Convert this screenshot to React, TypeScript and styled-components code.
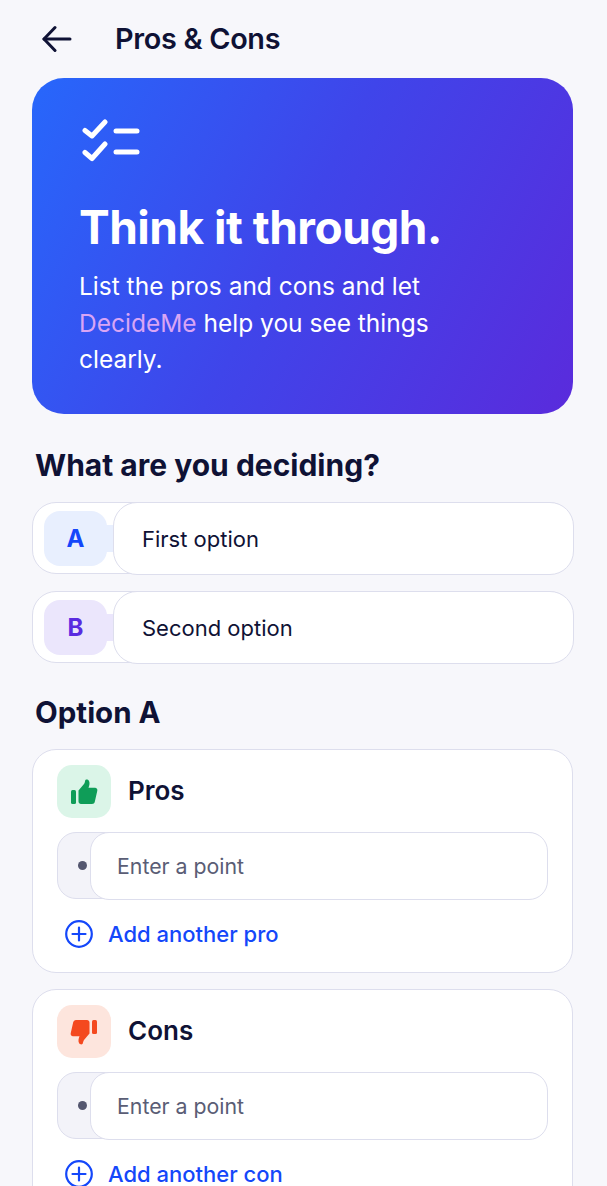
import React from "react";
import styled, { createGlobalStyle } from "styled-components";

const GlobalStyle = createGlobalStyle`
  html, body {
    margin: 0;
    padding: 0;
    height: 1186px;
    overflow: hidden;
    background: #f7f7fb;
    font-family: Inter, "Liberation Sans", sans-serif;
    color: #0f1235;
  }
  * { box-sizing: border-box; }
`;

const BackIcon = () => (
  <svg width="30" height="28" viewBox="0 0 30 28" fill="none" stroke="#0f1235" strokeWidth="3" strokeLinecap="round" strokeLinejoin="round">
    <path d="M2 14h26" />
    <path d="M13 2.500 2 14l11 11.500" />
  </svg>
);

const ChecklistIcon = () => (
  <svg width="58" height="44" viewBox="0 0 58 44" fill="none" stroke="#fff" strokeWidth="5" strokeLinecap="round" strokeLinejoin="round">
    <path d="M3 11.500 10 17 23 3" />
    <path d="M3 33.500 10 39.500 23 25" />
    <path d="M34 12h21" />
    <path d="M34 33h21" />
  </svg>
);

const ThumbIcon = ({ color, down }: { color: string; down?: boolean }) => (
  <svg width="28" height="26" viewBox="0 0 28 26" fill={color} style={down ? { transform: "rotate(180deg)" } : undefined}>
    <rect x="1" y="11" width="5" height="14" rx="1.500" />
    <path d="M8.500 11.500 14 5c.8-1.200 1-2.800 1.200-3.600.2-1 2.800-1.300 3.800.6 1 2 .4 4.600-.5 6.800h6.500c1.600 0 2.700 1.400 2.300 2.900l-2.500 11c-.3 1.300-1.400 2.300-2.800 2.300H11c-1.400 0-2.500-1.100-2.500-2.500V11.500Z" />
  </svg>
);

const PlusIcon = () => (
  <svg width="28" height="28" viewBox="0 0 28 28" fill="none" stroke="#1447fa" strokeWidth="2.200" strokeLinecap="round">
    <circle cx="14" cy="14" r="12.800" />
    <path d="M14 7.500v13M7.500 14h13" />
  </svg>
);

const ProsConsCard = ({ kind }: { kind: "pro" | "con" }) => {
  const isPro = kind === "pro";
  return (
    <Card>
      <CardHeader>
        <CardIcon $bg={isPro ? "#dbf5e8" : "#fde5dd"}>
          <ThumbIcon color={isPro ? "#0f9d58" : "#f4491f"} down={!isPro} />
        </CardIcon>
        <CardTitle>{isPro ? "Pros" : "Cons"}</CardTitle>
      </CardHeader>
      <PointRow>
        <Bullet />
        <PointInput>Enter a point</PointInput>
      </PointRow>
      <AddRow>
        <PlusIcon />
        <AddLabel>{isPro ? "Add another pro" : "Add another con"}</AddLabel>
      </AddRow>
    </Card>
  );
};

export default function App() {
  return (
    <Page>
      <GlobalStyle />
      <Header>
        <BackIcon />
        <PageTitle>Pros &amp; Cons</PageTitle>
      </Header>

      <Hero>
        <ChecklistIcon />
        <HeroTitle>Think it through.</HeroTitle>
        <HeroText>
          List the pros and cons and let <Brand>DecideMe</Brand> help you see things clearly.
        </HeroText>
      </Hero>

      <SectionTitle>What are you deciding?</SectionTitle>
      <OptionList>
        <OptionRow>
          <OptionBadge $bg="#e8effe" $color="#1447fa">A</OptionBadge>
          <OptionInput>First option</OptionInput>
        </OptionRow>
        <OptionRow>
          <OptionBadge $bg="#ebe6fc" $color="#5a2be0">B</OptionBadge>
          <OptionInput>Second option</OptionInput>
        </OptionRow>
      </OptionList>

      <OptionHeading>Option A</OptionHeading>
      <CardList>
        <ProsConsCard kind="pro" />
        <ProsConsCard kind="con" />
      </CardList>
    </Page>
  );
}

const Page = styled.div`
  width: 607px;
  height: 1186px;
  overflow: hidden;
  padding: 0 34px 0 32px;
  background: #f7f7fb;
`;

const Header = styled.header`
  display: flex;
  align-items: center;
  height: 78px;
  padding-left: 10px;
  gap: 43px;
`;

const PageTitle = styled.h1`
  margin: 0;
  font-size: 28.800px;
  font-weight: 600;
  letter-spacing: -0.3px;
  line-height: 34px;
`;

const Hero = styled.section`
  height: 336px;
  padding: 41px 47px 0 47px;
  border-radius: 32px;
  background: linear-gradient(118deg, #2767fb 0%, #3f45ea 48%, #5a2bdc 100%);
  color: #fff;

  svg {
    display: block;
    margin-left: 3px;
  }
`;

const HeroTitle = styled.h2`
  margin: 35px 0 0;
  font-size: 46px;
  font-weight: 700;
  line-height: 58px;
  letter-spacing: -0.5px;
  white-space: nowrap;
`;

const HeroText = styled.p`
  margin: 12px 0 0;
  width: 370px;
  font-size: 24.500px;
  line-height: 36.500px;
  font-weight: 400;
`;

const Brand = styled.span`
  color: #d9a5f5;
`;

const SectionTitle = styled.h3`
  margin: 32px 0 0 3px;
  font-size: 30px;
  font-weight: 700;
  line-height: 38px;
`;

const OptionList = styled.div`
  display: flex;
  flex-direction: column;
  gap: 17px;
  margin-top: 18px;
`;

const OptionRow = styled.div`
  display: flex;
  align-items: stretch;
  height: 72px;
  border: 1.500px solid #dddeed;
  border-radius: 24px;
  background: #fff;
  padding-left: 11px;
`;

const OptionBadge = styled.div<{ $bg: string; $color: string }>`
  position: relative;
  flex: none;
  display: flex;
  align-items: center;
  justify-content: center;
  align-self: center;
  width: 63px;
  height: 55px;
  margin-right: 6px;
  border-radius: 16px;
  background: ${(p) => p.$bg};
  color: ${(p) => p.$color};
  font-size: 24px;
  font-weight: 700;

  &::after {
    content: "";
    position: absolute;
    top: 14px;
    bottom: 14px;
    right: -6px;
    width: 7px;
    background: ${(p) => p.$bg};
  }
`;

const OptionInput = styled.div`
  flex: 1;
  display: flex;
  align-items: center;
  margin: -1.500px -1.500px -1.500px 0;
  padding: 1px 0 0 28px;
  border: 1.500px solid #dddeed;
  border-radius: 24px;
  background: #fff;
  font-size: 22px;
  font-weight: 400;
`;

const OptionHeading = styled.h3`
  margin: 30px 0 0 3px;
  font-size: 29.500px;
  font-weight: 700;
  line-height: 38px;
`;

const CardList = styled.div`
  display: flex;
  flex-direction: column;
  gap: 16px;
  margin-top: 18px;
`;

const Card = styled.article`
  height: 224px;
  padding: 15px 25px 0 24px;
  border: 1.500px solid #dddeed;
  border-radius: 24px;
  background: #fff;
`;

const CardHeader = styled.div`
  display: flex;
  align-items: center;
  gap: 17px;
`;

const CardIcon = styled.div<{ $bg: string }>`
  display: flex;
  align-items: center;
  justify-content: center;
  width: 54px;
  height: 53px;
  border-radius: 15px;
  background: ${(p) => p.$bg};
`;

const CardTitle = styled.h4`
  margin: -2px 0 0;
  font-size: 26px;
  font-weight: 600;
  line-height: 32px;
`;

const PointRow = styled.div`
  display: flex;
  align-items: center;
  height: 67px;
  margin-top: 14px;
  border: 1.500px solid #dddeed;
  border-radius: 19px;
  background: #f3f3f9;
`;

const Bullet = styled.span`
  flex: none;
  width: 9px;
  height: 9px;
  margin: 0 3px 0 20px;
  border-radius: 50%;
  background: #53566f;
`;

const PointInput = styled.div`
  flex: 1;
  display: flex;
  align-items: center;
  align-self: stretch;
  margin: -1.500px -1.500px -1.500px 0;
  padding-left: 26px;
  border: 1.500px solid #dddeed;
  border-radius: 19px;
  background: #fff;
  color: #5a5d75;
  font-size: 21.300px;
`;

const AddRow = styled.div`
  display: flex;
  align-items: center;
  gap: 15px;
  margin-top: 21px;
  padding-left: 8px;
`;

const AddLabel = styled.span`
  color: #1447fa;
  font-size: 22px;
  font-weight: 500;
`;
